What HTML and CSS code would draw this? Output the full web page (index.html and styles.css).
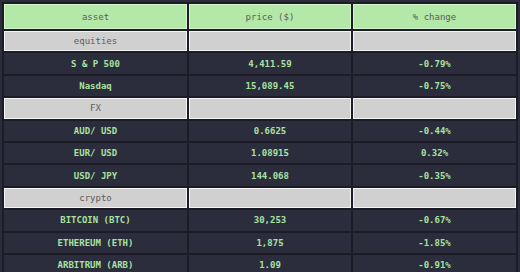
FILE: index.html
```html
<!DOCTYPE html>
<html>
<head>
<meta charset="utf-8">
<link rel="stylesheet" href="styles.css">
</head>
<body>
<table class="quotes">
  <thead>
    <tr class="head"><th class="c1">asset</th><th class="c2">price ($)</th><th class="c3">% change</th></tr>
  </thead>
  <tbody>
    <tr class="cat"><td>equities</td><td></td><td></td></tr>
    <tr class="row"><td>S &amp; P 500</td><td>4,411.59</td><td>-0.79%</td></tr>
    <tr class="row"><td>Nasdaq</td><td>15,089.45</td><td>-0.75%</td></tr>
    <tr class="cat"><td>FX</td><td></td><td></td></tr>
    <tr class="row"><td>AUD/ USD</td><td>0.6625</td><td>-0.44%</td></tr>
    <tr class="row"><td>EUR/ USD</td><td>1.08915</td><td>0.32%</td></tr>
    <tr class="row"><td>USD/ JPY</td><td>144.068</td><td>-0.35%</td></tr>
    <tr class="cat"><td>crypto</td><td></td><td></td></tr>
    <tr class="row"><td>BITCOIN (BTC)</td><td>30,253</td><td>-0.67%</td></tr>
    <tr class="row"><td>ETHEREUM (ETH)</td><td>1,875</td><td>-1.85%</td></tr>
    <tr class="row"><td>ARBITRUM (ARB)</td><td>1.09</td><td>-0.91%</td></tr>
  </tbody>
</table>
</body>
</html>
```

FILE: styles.css
```css
html, body {
  background: #2b2d3d;
}
body {
  margin: 2px;
  font-family: "DejaVu Sans Mono", "Liberation Mono", monospace;
  font-size: 9px;
}
.quotes {
  width: 516px;
  border-collapse: separate;
  border-spacing: 2px;
  background: #1b1c25;
  table-layout: fixed;
}
.c1 { width: 183px; }
.c2 { width: 162px; }
.c3 { width: 163px; }
.quotes th,
.quotes td {
  padding: 0;
  text-align: center;
  vertical-align: middle;
  box-sizing: border-box;
}
.head th {
  height: 25px;
  background: #b3e8a8;
  border: 1px solid #d6f6cf;
  color: #5a5d5a;
  font-weight: normal;
}
.cat td {
  height: 20.4px;
  background: #d0d0d0;
  border: 1px solid #f4f4f4;
  color: #5c5c5c;
}
.row td {
  height: 20.4px;
  background: #2b2d3d;
  border: 1px solid #2b2d3d;
  color: #a8e2a0;
  font-weight: bold;
}
```
